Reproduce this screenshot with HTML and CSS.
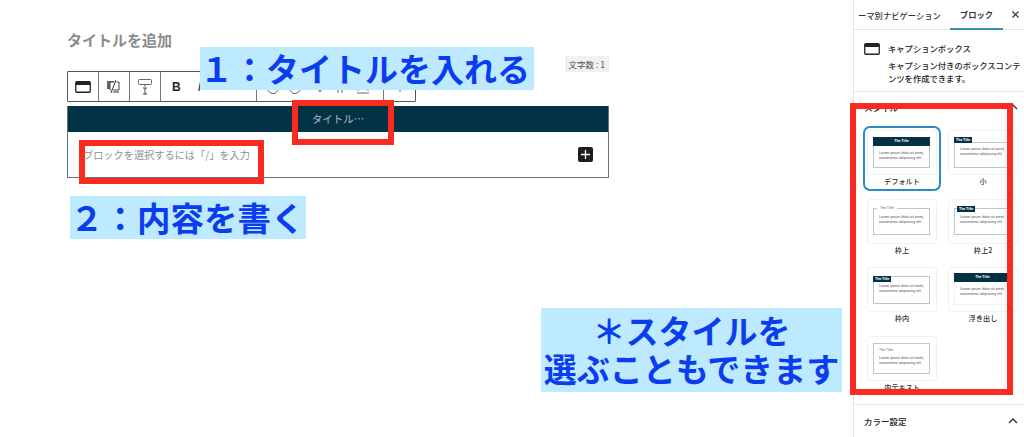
FILE: index.html
```html
<!DOCTYPE html>
<html lang="ja">
<head>
    <meta charset="UTF-8">
    <meta name="viewport" content="width=device-width, initial-scale=1.0">
    <title>キャプションボックス</title>
    <link rel="stylesheet" href="styles.css">
</head>
<body>

    <div class="page">
        <main class="editor">
            <h1 class="post-title">タイトルを追加</h1>

            <div class="toolbar-row">
                <div class="toolbar">
                    <div class="tool-group">
                        <svg width="16" height="12" viewBox="0 0 16 12"><rect x="0.75" y="0.75" width="14.5" height="10.5" rx="1" fill="none" stroke="#222" stroke-width="1.3"/><rect x="1" y="1" width="14" height="3" fill="#222"/></svg>
                    </div>
                    <div class="tool-group">
                        <svg width="16" height="15" viewBox="0 0 16 15"><rect x="1" y="2" width="8" height="8" fill="#666"/><path d="M4 3h9v8H4z" fill="#fff" stroke="#444"/><path d="M10 1L5 14" stroke="#fff" stroke-width="2.4"/><path d="M10 1L5 14" stroke="#333"/><path d="M7 13h6" stroke="#333"/></svg>
                    </div>
                    <div class="tool-group">
                        <svg width="16" height="16" viewBox="0 0 16 16"><rect x="1.5" y="0.5" width="13" height="5" rx="1" fill="none" stroke="#666"/><path d="M8 5.5v2M8 9v6M6 9h4M6 15h4" stroke="#444" fill="none"/></svg>
                    </div>
                    <div class="tool-group tool-format">
                        <span class="tool-bold">B</span>
                        <span class="tool-italic">I</span>
                    </div>
                    <div class="tool-group tool-inline">
                        <svg width="126" height="14" viewBox="0 0 126 14"><circle cx="16" cy="8" r="5.5" fill="none" stroke="#666"/><circle cx="38" cy="8" r="5.5" fill="none" stroke="#666"/><path d="M61 9l2 3 2-3M81 6v7M85 6v7" stroke="#666" fill="none"/><path d="M100 13h12M101 6v5M111 6v5" stroke="#666" fill="none"/></svg>
                    </div>
                    <div class="tool-group">
                        <svg width="10" height="10" viewBox="0 0 10 10"><path d="M5 4v6" stroke="#666"/></svg>
                    </div>
                </div>
                <span class="word-count">文字数 : 1</span>
            </div>

            <section class="cap-box">
                <div class="cap-title">タイトル…</div>
                <div class="cap-body">
                    <p>ブロックを選択するには「/」を入力</p>
                    <span class="add-btn">
                        <svg width="9" height="9" viewBox="0 0 9 9"><path d="M4.5 0v9M0 4.5h9" stroke="#fff" stroke-width="1.3"/></svg>
                    </span>
                </div>
            </section>
        </main>

        <aside class="sidebar">
            <div class="tabs">
                <span class="tab-nav">ーマ別ナビゲーション</span>
                <span class="tab-block">ブロック</span>
                <svg class="tab-close" width="7" height="7" viewBox="0 0 7 7"><path d="M0.5 0.5l6 6M6.5 0.5l-6 6" stroke="#333" stroke-width="1.2"/></svg>
            </div>

            <div class="block-info">
                <svg width="16" height="12" viewBox="0 0 16 12"><rect x="0.75" y="0.75" width="14.5" height="10.5" rx="1" fill="none" stroke="#222" stroke-width="1.3"/><rect x="1" y="1" width="14" height="3" fill="#222"/></svg>
                <div>
                    <h2>キャプションボックス</h2>
                    <p>キャプション付きのボックスコンテンツを作成できます。</p>
                </div>
            </div>

            <div class="panel-head panel-style">
                <span>スタイル</span>
                <svg class="chevron" width="10" height="6" viewBox="0 0 10 6"><path d="M1 5l4-4 4 4" fill="none" stroke="#333" stroke-width="1.4"/></svg>
            </div>

            <div class="style-grid">
                <div class="style-item selected">
                    <div class="style-card">
                        <div class="mini mini-default">
                            <div class="mini-head">The Title</div>
                            <div class="mini-text">Lorem ipsum dolor sit amet,<br>consectetur adipiscing elit.</div>
                        </div>
                    </div>
                    <div class="style-name">デフォルト</div>
                </div>
                <div class="style-item">
                    <div class="style-card">
                        <div class="mini mini-small">
                            <div class="mini-tab">The Title</div>
                            <div class="mini-text">Lorem ipsum dolor sit amet,<br>consectetur adipiscing elit.</div>
                        </div>
                    </div>
                    <div class="style-name">小</div>
                </div>
                <div class="style-item">
                    <div class="style-card">
                        <div class="mini mini-ontop">
                            <div class="mini-label">The Title</div>
                            <div class="mini-text">Lorem ipsum dolor sit amet,<br>consectetur adipiscing elit.</div>
                        </div>
                    </div>
                    <div class="style-name">枠上</div>
                </div>
                <div class="style-item">
                    <div class="style-card">
                        <div class="mini mini-ontop2">
                            <div class="mini-tab">The Title</div>
                            <div class="mini-text">Lorem ipsum dolor sit amet,<br>consectetur adipiscing elit.</div>
                        </div>
                    </div>
                    <div class="style-name">枠上2</div>
                </div>
                <div class="style-item">
                    <div class="style-card">
                        <div class="mini mini-inner">
                            <div class="mini-tab">The Title</div>
                            <div class="mini-text">Lorem ipsum dolor sit amet,<br>consectetur adipiscing elit.</div>
                        </div>
                    </div>
                    <div class="style-name">枠内</div>
                </div>
                <div class="style-item">
                    <div class="style-card">
                        <div class="mini mini-float">
                            <div class="mini-head">The Title</div>
                            <div class="mini-text">Lorem ipsum dolor sit amet,<br>consectetur adipiscing elit.</div>
                        </div>
                    </div>
                    <div class="style-name">浮き出し</div>
                </div>
                <div class="style-item">
                    <div class="style-card">
                        <div class="mini mini-plain">
                            <div class="mini-plain-title">The Title</div>
                            <div class="mini-text">Lorem ipsum dolor sit amet,<br>consectetur adipiscing elit.</div>
                        </div>
                    </div>
                    <div class="style-name">内テキスト</div>
                </div>
            </div>

            <div class="panel-head panel-color">
                <span>カラー設定</span>
                <svg class="chevron" width="10" height="6" viewBox="0 0 10 6"><path d="M1 5l4-4 4 4" fill="none" stroke="#333" stroke-width="1.4"/></svg>
            </div>
        </aside>
    </div>

    <!-- annotations drawn over the screenshot -->
    <div class="note note-1">１：タイトルを入れる</div>
    <div class="note note-2">２：内容を書く</div>
    <div class="note note-3">＊スタイルを<br>選ぶこともできます</div>
    <div class="red-box red-title"></div>
    <div class="red-box red-body"></div>
    <div class="red-box red-styles"></div>

</body>
</html>
```

FILE: styles.css
```css
html, body {
    margin: 0;
    padding: 0;
}
body {
    position: relative;
    width: 1024px;
    height: 437px;
    overflow: hidden;
    background-color: #fff;
    color: #222;
    font-family: "Noto Sans CJK JP", "Noto Sans", sans-serif;
}
.page {
    display: flex;
    height: 437px;
    overflow: hidden;
}

/* editor side */
.editor {
    width: 542px;
    padding: 29px 244px 0 67px;
    flex: none;
}
.post-title {
    margin: 0;
    height: 21px;
    line-height: 21px;
    font-size: 15px;
    font-weight: 700;
    color: #8c8c8c;
}
.toolbar-row {
    display: flex;
    justify-content: space-between;
    align-items: flex-start;
    margin-top: 21px;
}
.toolbar {
    display: flex;
    height: 29px;
    border: 1px solid #555;
    border-radius: 1px;
    background-color: #fff;
}
.tool-group {
    display: flex;
    align-items: center;
    justify-content: center;
    width: 31px;
    box-sizing: border-box;
    border-right: 1px solid #777;
}
.tool-group:last-child {
    border-right: none;
}
.tool-format {
    width: 96px;
    justify-content: flex-start;
    gap: 17px;
    padding-left: 11px;
}
.tool-bold {
    font-size: 12px;
    font-weight: 700;
    font-family: "Liberation Sans", sans-serif;
}
.tool-italic {
    font-size: 12px;
    font-style: italic;
    font-family: "Liberation Sans", sans-serif;
}
.tool-inline {
    width: 127px;
}
.word-count {
    margin-top: -15px;
    padding: 0 4px;
    height: 16px;
    line-height: 16px;
    font-size: 8.5px;
    color: #555;
    background-color: #f0f0f0;
}
.cap-box {
    margin-top: 4px;
    border: 1px solid #5d7480;
    border-top: none;
}
.cap-title {
    height: 26px;
    line-height: 25px;
    text-align: center;
    font-size: 10.5px;
    color: #b4bcc0;
    background-color: #023243;
}
.cap-body {
    display: flex;
    justify-content: space-between;
    align-items: center;
    height: 45px;
    padding: 0 15px 0 15px;
}
.cap-body p {
    margin: 0;
    font-size: 10.2px;
    color: #8f8f8f;
}
.add-btn {
    display: flex;
    align-items: center;
    justify-content: center;
    width: 15px;
    height: 15px;
    border-radius: 2px;
    background-color: #1e1e1e;
}

/* right sidebar */
.sidebar {
    position: relative;
    width: 170px;
    flex: none;
    border-left: 1px solid #e3e3e3;
}
.tabs {
    display: flex;
    align-items: center;
    height: 30px;
    box-sizing: border-box;
    border-bottom: 1px solid #e3e3e3;
    font-size: 8.3px;
    font-weight: 500;
    color: #333;
}
.tab-nav {
    flex: none;
    width: 84px;
    margin-left: 4px;
    white-space: nowrap;
}
.tab-block {
    display: block;
    flex: none;
    width: 53px;
    margin-left: 8px;
    height: 30px;
    line-height: 28px;
    text-align: center;
    box-sizing: border-box;
    border-bottom: 2px solid #3c8bbd;
    font-weight: 700;
}
.tab-close {
    flex: none;
    margin-left: 9px;
}
.block-info {
    display: flex;
    gap: 8px;
    height: 62px;
    padding: 13px 2px 0 10px;
    box-sizing: border-box;
    border-bottom: 1px solid #e3e3e3;
}
.block-info svg {
    flex: none;
}
.block-info h2 {
    margin: 0;
    font-size: 8.3px;
    line-height: 11px;
    font-weight: 500;
}
.block-info p {
    margin: 5px 0 0;
    font-size: 8.3px;
    line-height: 12.5px;
    font-weight: 500;
}
.panel-head {
    display: flex;
    justify-content: space-between;
    align-items: center;
    padding: 0 6px 0 10px;
    font-size: 8.5px;
    font-weight: 500;
}
.panel-style {
    height: 30px;
    margin-bottom: 8px;
}
.panel-color {
    position: absolute;
    top: 404px;
    left: 0;
    right: 0;
    height: 32px;
    border-top: 1px solid #e3e3e3;
}
.style-grid {
    display: grid;
    grid-template-columns: 70px 70px;
    column-gap: 11px;
    row-gap: 11.5px;
    padding-left: 13px;
}
.style-item {
    height: 57px;
    border-radius: 3px;
}
.style-item.selected {
    outline: 2px solid #2c8ac4;
    outline-offset: 2px;
}
.style-card {
    height: 45px;
    padding: 6px 6px 6px 5px;
    box-sizing: border-box;
    border: 1px solid #f1f1f1;
    border-radius: 3px;
}
.style-name {
    height: 13px;
    line-height: 13px;
    text-align: center;
    font-size: 7.2px;
    font-weight: 500;
    color: #333;
}

/* tiny style previews */
.mini {
    position: relative;
    height: 31px;
    box-sizing: border-box;
    border: 1px solid #b7c9d0;
    font-family: Roboto, sans-serif;
    font-size: 3.6px;
    line-height: 5px;
}
.mini-text {
    padding: 5px 0 0 5px;
    color: #555;
    white-space: nowrap;
}
.mini-head {
    height: 9px;
    line-height: 9px;
    margin: -1px -1px 0;
    text-align: center;
    font-weight: 700;
    color: #fff;
    background-color: #023243;
}
.mini-tab {
    position: absolute;
    left: -1px;
    top: -1px;
    height: 6px;
    padding: 0 2px;
    line-height: 6px;
    font-weight: 700;
    color: #fff;
    background-color: #023243;
}
.mini-small {
    margin-top: 5px;
    height: 26px;
}
.mini-small .mini-tab {
    top: -6px;
}
.mini-small .mini-text {
    padding-top: 4px;
}
.mini-ontop {
    margin-top: 2px;
    height: 27px;
}
.mini-label {
    position: absolute;
    left: 3px;
    top: -3px;
    padding: 0 3px;
    line-height: 5px;
    color: #4d6a75;
    background-color: #fff;
}
.mini-ontop .mini-text,
.mini-ontop2 .mini-text {
    padding-top: 6px;
}
.mini-ontop2 {
    margin-top: 2px;
    height: 27px;
}
.mini-ontop2 .mini-tab {
    left: 2px;
    top: -3px;
}
.mini-inner {
    margin-top: 2px;
    height: 28px;
}
.mini-inner .mini-text {
    padding-top: 7px;
}
.mini-float {
    margin-top: -1px;
    height: 32px;
    border-color: #eef1f2;
}
.mini-float .mini-text {
    padding-top: 5px;
}
.mini-plain-title {
    padding: 4px 0 0 5px;
    color: #4d6a75;
}
.mini-plain .mini-text {
    padding-top: 3px;
}

/* annotations */
.note {
    position: absolute;
    box-sizing: border-box;
    color: #0b3df0;
    background-color: #bdeaff;
    font-size: 33px;
    font-weight: 700;
    white-space: nowrap;
}
.note-1 {
    left: 200px;
    top: 47px;
    width: 334px;
    height: 43px;
    line-height: 42px;
}
.note-2 {
    left: 70px;
    top: 196px;
    width: 236px;
    height: 43px;
    line-height: 41px;
    font-size: 33.5px;
}
.note-3 {
    left: 541px;
    top: 308px;
    width: 301px;
    height: 84px;
    padding-top: 3px;
    line-height: 38px;
    text-align: center;
}
.red-box {
    position: absolute;
    box-sizing: border-box;
    border: 6px solid #fa2a1e;
}
.red-title {
    left: 292px;
    top: 100px;
    width: 102px;
    height: 45px;
}
.red-body {
    left: 79px;
    top: 140px;
    width: 185px;
    height: 44px;
}
.red-styles {
    left: 850px;
    top: 103px;
    width: 163px;
    height: 292px;
}
```
